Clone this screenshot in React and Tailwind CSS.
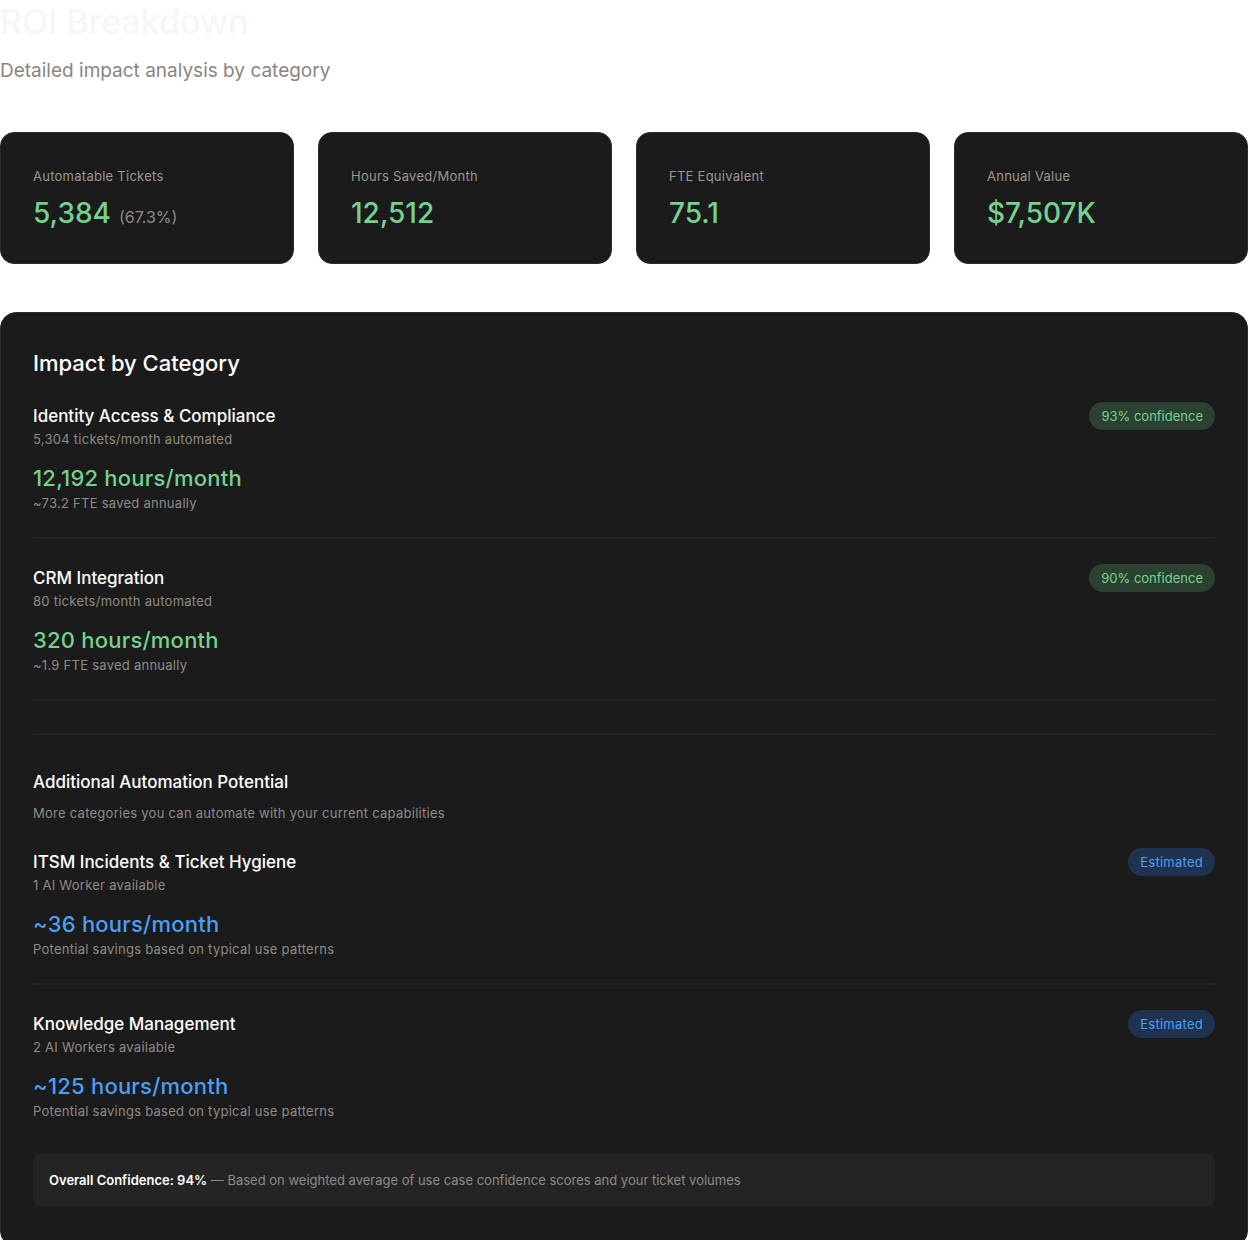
const stats = [
  { label: "Automatable Tickets", value: "5,384", extra: "(67.3%)" },
  { label: "Hours Saved/Month", value: "12,512" },
  { label: "FTE Equivalent", value: "75.1" },
  { label: "Annual Value", value: "$7,507K" },
];

const categories = [
  {
    name: "Identity Access & Compliance",
    tickets: "5,304 tickets/month automated",
    hours: "12,192 hours/month",
    fte: "~73.2 FTE saved annually",
    confidence: "93% confidence",
  },
  {
    name: "CRM Integration",
    tickets: "80 tickets/month automated",
    hours: "320 hours/month",
    fte: "~1.9 FTE saved annually",
    confidence: "90% confidence",
  },
];

const potential = [
  {
    name: "ITSM Incidents & Ticket Hygiene",
    workers: "1 AI Worker available",
    hours: "~36 hours/month",
  },
  {
    name: "Knowledge Management",
    workers: "2 AI Workers available",
    hours: "~125 hours/month",
  },
];

function StatCard({ label, value, extra }) {
  return (
    <div className="bg-[#1b1b1b] border border-[#2c2c2c] rounded-[14px] px-8 pt-[33px] pb-8">
      <div className="text-[13px] leading-5 tracking-[0.02em] text-[#9a9692]">{label}</div>
      <div className="mt-[9px] flex items-baseline gap-2">
        <span className="text-[28px] leading-9 font-medium text-[#74d18e]">{value}</span>
        {extra && <span className="text-[16px] text-[#8e8a86]">{extra}</span>}
      </div>
    </div>
  );
}

function CategoryRow({ item }) {
  return (
    <div className="flex justify-between items-start pt-[27px] pb-6 border-b-2 border-[#232323]">
      <div>
        <div className="text-[17px] leading-6 font-medium text-white">{item.name}</div>
        <div className="mt-px text-[13px] leading-5 tracking-[0.02em] text-[#8e8a86]">{item.tickets}</div>
        <div className="mt-[15px] text-[22px] leading-7 font-medium tracking-[0.01em] text-[#74d18e]">{item.hours}</div>
        <div className="mt-px text-[13px] leading-5 tracking-[0.02em] text-[#8e8a86]">{item.fte}</div>
      </div>
      <span className="-mt-0.5 rounded-full bg-[#2b4132] text-[#74d18e] text-[13px] leading-5 px-3 py-1">
        {item.confidence}
      </span>
    </div>
  );
}

function PotentialRow({ item, last }) {
  return (
    <div className={`flex justify-between items-start ${last ? "pt-[27px]" : "pb-6 border-b-2 border-[#232323]"}`}>
      <div>
        <div className="text-[17px] leading-6 font-medium text-white">{item.name}</div>
        <div className="mt-px text-[13px] leading-5 tracking-[0.02em] text-[#8e8a86]">{item.workers}</div>
        <div className="mt-[15px] text-[22px] leading-7 font-medium tracking-[0.01em] text-[#4c9ef5]">{item.hours}</div>
        <div className="mt-px text-[13px] leading-5 tracking-[0.02em] text-[#8e8a86]">Potential savings based on typical use patterns</div>
      </div>
      <span className="-mt-0.5 rounded-full bg-[#1f3350] text-[#4c9ef5] text-[13px] leading-5 tracking-[0.02em] px-3 py-1">
        Estimated
      </span>
    </div>
  );
}

export default function App() {
  return (
    <div className="bg-white min-h-screen" style={{ fontFamily: "Inter, 'Noto Sans', sans-serif" }}>
      <h1 className="text-[34px] leading-[44px] font-medium text-[#f7f6f3]">ROI Breakdown</h1>
      <p className="mt-[13px] text-[19px] leading-7 text-[#8a8581]">Detailed impact analysis by category</p>

      <div className="mt-[47px] grid grid-cols-4 gap-6">
        {stats.map((s) => (
          <StatCard key={s.label} {...s} />
        ))}
      </div>

      <div className="mt-12 bg-[#1b1b1b] border border-[#2c2c2c] rounded-[16px] px-8 pt-[34px] pb-10">
        <h2 className="text-[22px] leading-8 font-medium text-white">Impact by Category</h2>
        <div className="-mt-[2px]">
          {categories.map((c) => (
            <CategoryRow key={c.name} item={c} />
          ))}
        </div>

        <div className="mt-8 border-t-2 border-[#232323] pt-[35px]">
          <div className="text-[17px] leading-6 font-medium text-white">Additional Automation Potential</div>
          <div className="mt-[9px] text-[13px] leading-5 tracking-[0.02em] text-[#8e8a86]">More categories you can automate with your current capabilities</div>
          <div className="mt-[27px]">
            {potential.map((p, i) => (
              <PotentialRow key={p.name} item={p} last={i === potential.length - 1} />
            ))}
          </div>
        </div>

        <div className="mt-[33px] bg-[#242424] rounded-lg px-4 py-4 text-[13px] leading-5">
          <span className="font-semibold text-white">Overall Confidence: 94%</span>
          <span className="text-[#8e8a86]"> — Based on weighted average of use case confidence scores and your ticket volumes</span>
        </div>
      </div>
    </div>
  );
}
